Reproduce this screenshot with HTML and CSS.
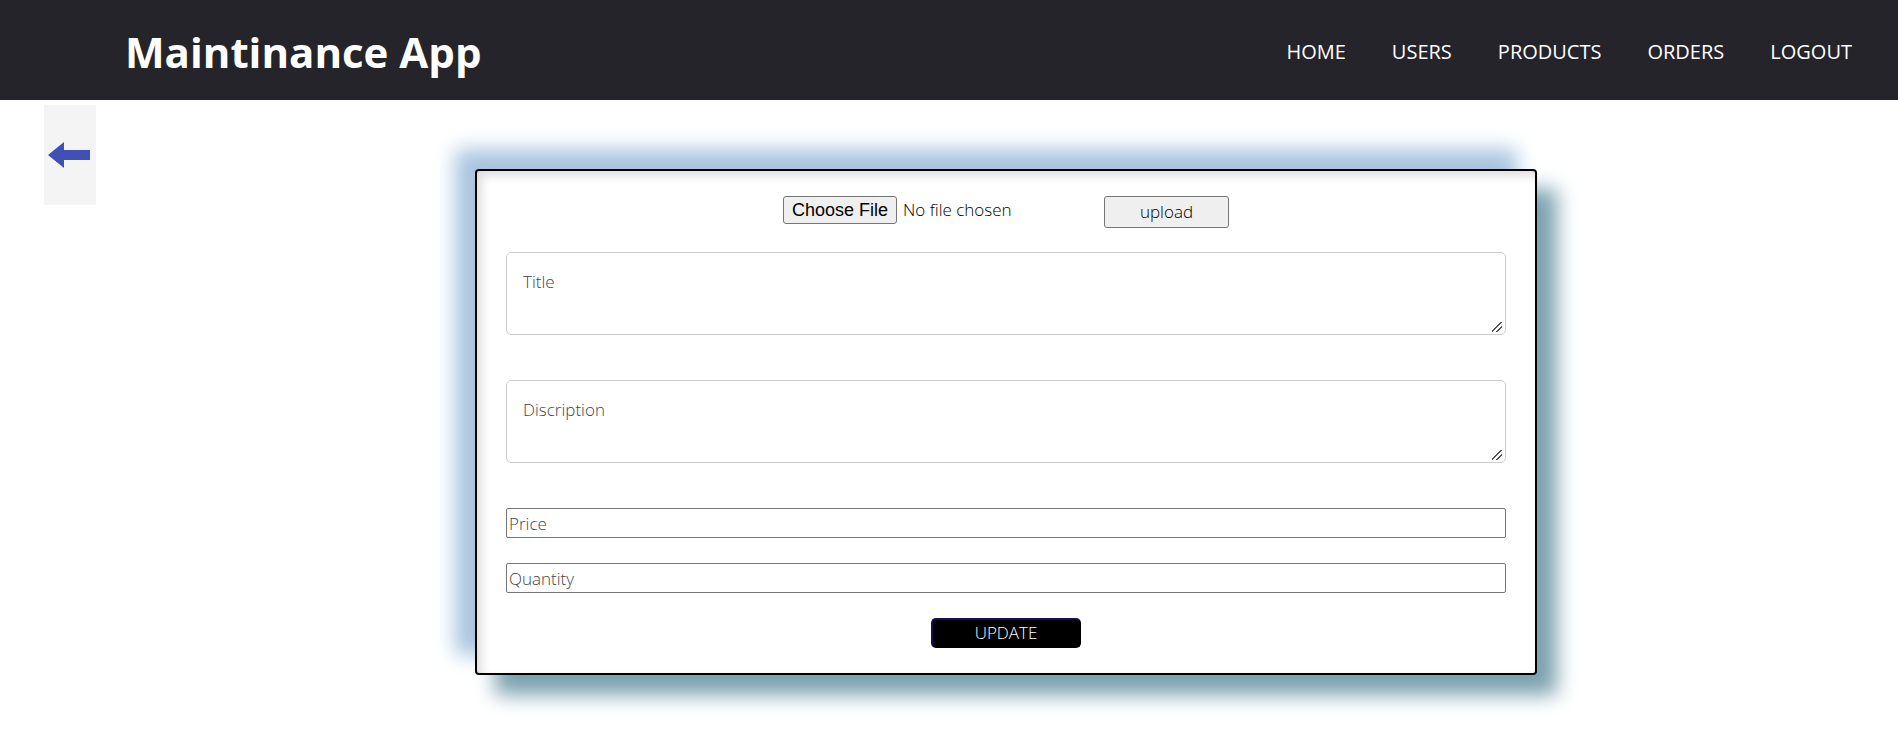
FILE: index.html
```html
<!DOCTYPE html>
<html lang="en">
<head>
<meta charset="utf-8">
<title>Maintinance App</title>
<link rel="stylesheet" href="styles.css">
</head>
<body>
<header class="navbar">
  <h1 class="brand">Maintinance App</h1>
  <nav class="nav-links">
    <a href="#">HOME</a>
    <a href="#">USERS</a>
    <a href="#">PRODUCTS</a>
    <a href="#">ORDERS</a>
    <a href="#">LOGOUT</a>
  </nav>
</header>
<main class="page">
  <button class="back" type="button" aria-label="Back">
    <svg width="42" height="26" viewBox="0 0 42 26" aria-hidden="true"><path fill="#3f51b5" d="M0 13 16 0V8H42V18H16V26Z"/></svg>
  </button>
  <form class="card">
    <div class="file-row">
      <input class="file" type="file" aria-label="Product image">
      <button class="upload" type="button">upload</button>
    </div>
    <textarea class="area" placeholder="Title" aria-label="Title"></textarea>
    <textarea class="area" placeholder="Discription" aria-label="Discription"></textarea>
    <input class="field" type="text" placeholder="Price" aria-label="Price">
    <input class="field" type="text" placeholder="Quantity" aria-label="Quantity">
    <button class="update" type="submit">UPDATE</button>
  </form>
</main>
</body>
</html>
```
FILE: styles.css
```css
* {
  box-sizing: border-box;
}

body {
  margin: 0;
  background: #fff;
  font-family: "Open Sans", "Noto Sans", sans-serif;
}

.navbar {
  display: flex;
  align-items: center;
  justify-content: space-between;
  min-height: 100px;
  padding: 4px 46px 0 125px;
  background: #25242a;
  color: #fff;
}

.brand {
  margin: 0;
  font-size: 42px;
  font-weight: 700;
  line-height: 60px;
}

.nav-links {
  display: flex;
  gap: 46px;
}

.nav-links a {
  color: #fff;
  font-size: 20px;
  line-height: 28px;
  text-decoration: none;
}

.page {
  display: flex;
  align-items: flex-start;
  gap: 18px;
  padding: 5px 0 55px 44px;
}

.back {
  display: flex;
  align-items: center;
  flex: none;
  width: 52px;
  height: 100px;
  padding: 0 4px;
  border: 0;
  background: #f4f4f4;
}

.card {
  display: flex;
  flex-direction: column;
  align-items: center;
  width: 60%;
  max-width: 1062px;
  min-width: 600px;
  margin: 64px auto 0;
  padding: 25px 29px;
  border: 2px solid #000;
  border-radius: 4px;
  background: #fff;
  box-shadow: inset 5px 5px 10px rgba(0, 0, 0, 0.13), 20px 20px 20px #7ba1b0, -20px -20px 20px #a8c5e0;
}

.card input,
.card textarea,
.card button {
  font-family: "Open Sans", "Noto Sans", sans-serif;
  font-size: 17px;
  font-weight: 300;
  line-height: 24px;
}

.file-row {
  display: flex;
  align-items: flex-start;
  gap: 45px;
  margin-bottom: 24px;
}

.card .file {
  width: 276px;
  height: 32px;
  color: #000;
}

.file::file-selector-button {
  height: 28px;
  margin: 0 6px 0 0;
  padding: 1px 8px;
  border: 1px solid #767676;
  border-radius: 3px;
  background: #efefef;
  color: #000;
  font: 18px "Liberation Sans", Arial, sans-serif;
}

.upload {
  width: 125px;
  height: 32px;
  padding: 0;
  border: 1px solid #767676;
  border-radius: 3px;
  background: #efefef;
  color: #000;
}

.area {
  width: 100%;
  height: 83px;
  margin-bottom: 45px;
  padding: 17px 16px 16px;
  border: 1px solid #ccc;
  border-radius: 5px;
  background: #fff;
}

.area::-webkit-resizer {
  background: linear-gradient(135deg, transparent 45%, #555 45% 55%, transparent 55% 70%, #555 70% 80%, transparent 80%) 2px 3px / 10px 10px no-repeat;
}

.field {
  width: 100%;
  height: 30px;
  margin-bottom: 25px;
  padding: 1px 2px;
  border: 1px solid #767676;
  border-radius: 2px;
  background: #fff;
}

.area::placeholder,
.field::placeholder {
  color: #444;
}

.update {
  width: 150px;
  height: 30px;
  padding: 0;
  border: 2px solid;
  border-color: #150d50 #000 #000 #150d50;
  border-radius: 5px;
  background: #000;
  color: #fff;
}
```
